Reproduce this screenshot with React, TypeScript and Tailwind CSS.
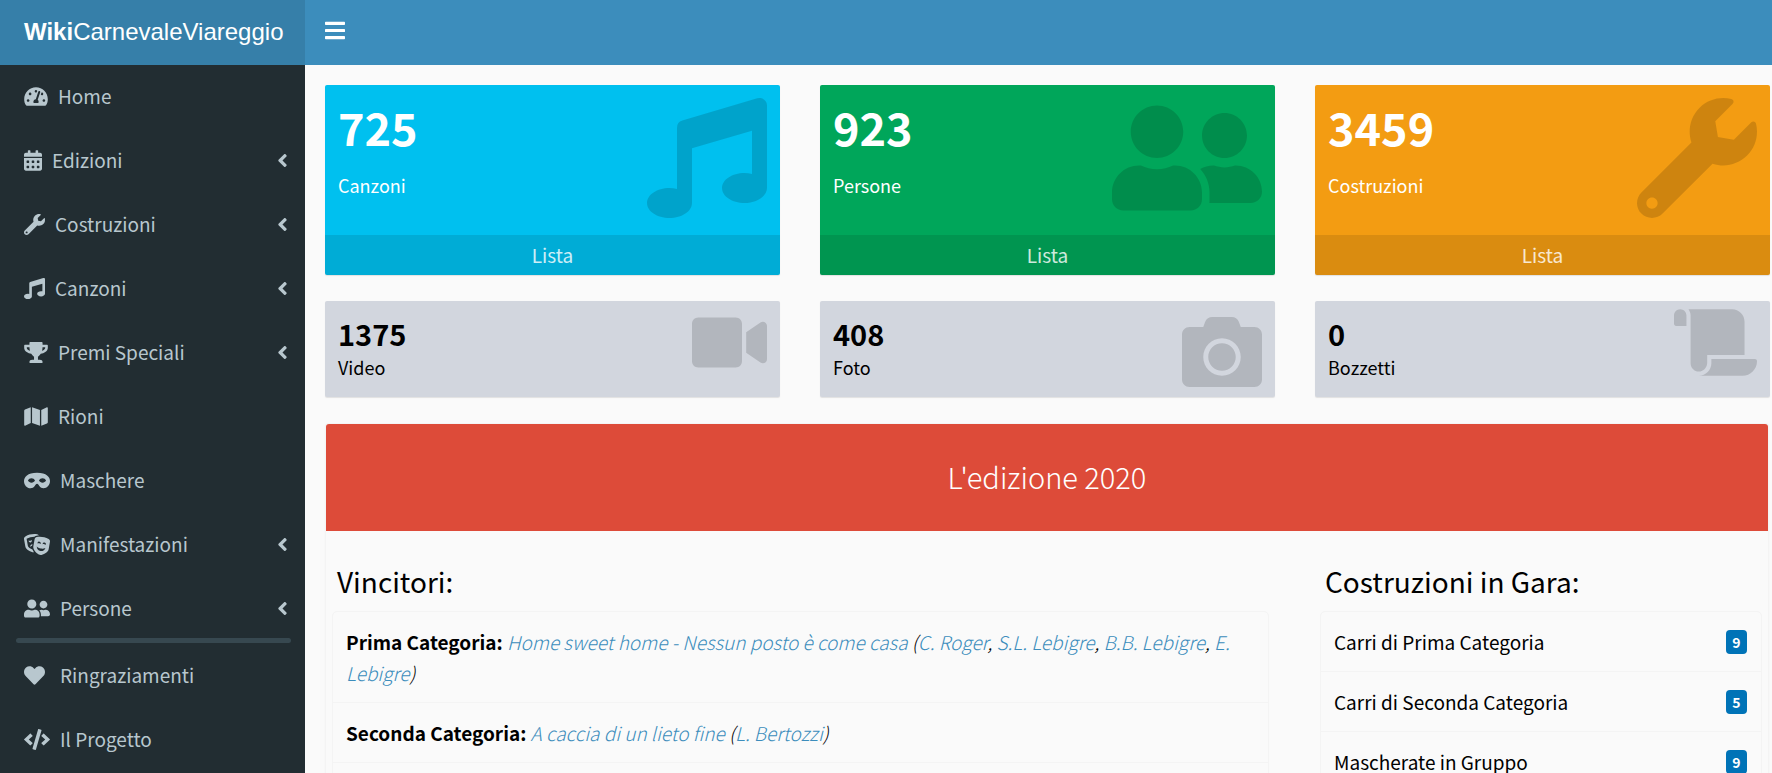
import type { ReactNode } from "react";
import type { IconType } from "react-icons";
import {
  FaAngleLeft,
  FaBars,
  FaCalendarAlt,
  FaCamera,
  FaCode,
  FaHeart,
  FaMap,
  FaMask,
  FaMusic,
  FaScroll,
  FaTachometerAlt,
  FaTheaterMasks,
  FaTrophy,
  FaUserFriends,
  FaVideo,
  FaWrench,
} from "react-icons/fa";

interface MenuItem {
  label: string;
  icon: IconType;
  iconClass: string;
  submenu?: boolean;
}

const menu: MenuItem[] = [
  { label: "Home", icon: FaTachometerAlt, iconClass: "w-6" },
  { label: "Edizioni", icon: FaCalendarAlt, iconClass: "w-[18px]", submenu: true },
  { label: "Costruzioni", icon: FaWrench, iconClass: "w-[21px]", submenu: true },
  { label: "Canzoni", icon: FaMusic, iconClass: "w-[21px]", submenu: true },
  { label: "Premi Speciali", icon: FaTrophy, iconClass: "w-6", submenu: true },
  { label: "Rioni", icon: FaMap, iconClass: "w-6" },
  { label: "Maschere", icon: FaMask, iconClass: "w-[26px]" },
  { label: "Manifestazioni", icon: FaTheaterMasks, iconClass: "w-[26px]", submenu: true },
  { label: "Persone", icon: FaUserFriends, iconClass: "w-[26px]", submenu: true },
];

const extraMenu: MenuItem[] = [
  { label: "Ringraziamenti", icon: FaHeart, iconClass: "w-[21px] mr-[5px]" },
  { label: "Il Progetto", icon: FaCode, iconClass: "w-[26px]" },
];

const categories = [
  { label: "Carri di Prima Categoria", count: 9 },
  { label: "Carri di Seconda Categoria", count: 5 },
  { label: "Mascherate in Gruppo", count: 9 },
];

export default function App() {
  return (
    <div className="h-screen overflow-hidden bg-[#fafafa] font-['Noto_Sans_CJK_SC',sans-serif] text-[19px] text-black">
      <Header />
      <div className="flex">
        <Sidebar />
        <main className="min-w-0 flex-1 pt-5 pr-[2px] pl-5">
          <div className="grid grid-cols-3 gap-x-10 gap-y-[26px]">
            <StatCard value="725" label="Canzoni" icon={FaMusic} iconClass="w-[120px]" color="bg-[#00c0ef]" />
            <StatCard value="923" label="Persone" icon={FaUserFriends} iconClass="w-[150px]" color="bg-[#00a65a]" />
            <StatCard value="3459" label="Costruzioni" icon={FaWrench} iconClass="w-[120px]" color="bg-[#f39c12]" />
            <SmallCard value="1375" label="Video" icon={FaVideo} iconClass="mt-2 h-[67px] w-[75px]" />
            <SmallCard value="408" label="Foto" icon={FaCamera} iconClass="mt-[11px] h-20 w-20" />
            <SmallCard value="0" label="Bozzetti" icon={FaScroll} iconClass="mt-2 h-[67px] w-[83px]" />
          </div>
          <Edition />
        </main>
      </div>
    </div>
  );
}

function Header() {
  return (
    <header className="flex h-[65px] bg-[#3c8dbc] text-white">
      <a
        href="#"
        className="flex w-[305px] items-center bg-[#367fa9] pb-[2px] pl-6 font-['Liberation_Sans',sans-serif] text-2xl"
      >
        <span>
          <b>Wiki</b>CarnevaleViareggio
        </span>
      </a>
      <button type="button" aria-label="Menu" className="px-5 pb-1">
        <FaBars className="h-[23px] w-5" />
      </button>
    </header>
  );
}

function Sidebar() {
  return (
    <nav className="min-h-screen w-[305px] bg-[#222d32] text-[#b8c7ce]">
      <ul className="-mt-px">
        {menu.map((item) => (
          <MenuRow key={item.label} {...item} />
        ))}
      </ul>
      <hr className="-mt-[2px] mr-[14px] ml-4 h-[5px] rounded-sm border-0 bg-[#374850]" />
      <ul>
        {extraMenu.map((item) => (
          <MenuRow key={item.label} {...item} />
        ))}
      </ul>
    </nav>
  );
}

function MenuRow({ label, icon: Icon, iconClass, submenu }: MenuItem) {
  return (
    <li>
      <a href="#" className="flex h-16 items-center pr-4 pl-6">
        <Icon className={`h-[21px] shrink-0 ${iconClass}`} />
        <span className="ml-[10px] flex-1">{label}</span>
        {submenu && <FaAngleLeft className="h-[21px] w-[13px]" />}
      </a>
    </li>
  );
}

interface CardProps {
  value: string;
  label: string;
  icon: IconType;
  iconClass: string;
}

function StatCard({ value, label, icon: Icon, iconClass, color }: CardProps & { color: string }) {
  return (
    <div className={`overflow-hidden rounded-[2px] text-white shadow-[0_1px_1px_rgba(0,0,0,0.1)] ${color}`}>
      <div className="flex h-[150px] justify-between px-[13px] pt-[13px]">
        <div>
          <h3 className="text-[45px] leading-[57px] font-bold">{value}</h3>
          <p className="mt-4 text-lg leading-7">{label}</p>
        </div>
        <Icon className={`h-[120px] text-black/15 ${iconClass}`} />
      </div>
      <a href="#" className="block bg-black/10 text-center leading-10 text-white/80">
        Lista
      </a>
    </div>
  );
}

function SmallCard({ value, label, icon: Icon, iconClass }: CardProps) {
  return (
    <div className="flex h-24 justify-between rounded-[2px] bg-[#d2d6de] px-[13px] shadow-[0_1px_1px_rgba(0,0,0,0.1)]">
      <div className="pt-[13px]">
        <h4 className="text-[29px] leading-[39px] font-bold">{value}</h4>
        <p className="text-lg leading-7">{label}</p>
      </div>
      <Icon className={`text-black/15 ${iconClass}`} />
    </div>
  );
}

function Edition() {
  return (
    <section className="mt-[26px] mr-px rounded-[3px] border border-[#f4f4f4] shadow-[0_1px_1px_rgba(0,0,0,0.1)]">
      <h2 className="rounded-t-[3px] bg-[#dd4b39] pt-8 pb-[35px] text-center text-[29px] leading-10 font-light text-white">
        L'edizione 2020
      </h2>
      <div className="flex gap-[51px] px-[6px] pt-[30px]">
        <div className="min-w-0 flex-[937]">
          <ListTitle>Vincitori:</ListTitle>
          <ul className="rounded-t-[5px] border border-[#f4f4f4]">
            <Winner category="Prima Categoria:" work="Home sweet home - Nessun posto è come casa">
              <Person>C. Roger</Person>, <Person>S.L. Lebigre</Person>, <Person>B.B. Lebigre</Person>,{" "}
              <Person>E. Lebigre</Person>
            </Winner>
            <Winner category="Seconda Categoria:" work="A caccia di un lieto fine">
              <Person>L. Bertozzi</Person>
            </Winner>
            <li className="h-[60px]"></li>
          </ul>
        </div>
        <div className="min-w-0 flex-[442]">
          <ListTitle>Costruzioni in Gara:</ListTitle>
          <ul className="rounded-t-[5px] border border-[#f4f4f4]">
            {categories.map(({ label, count }) => (
              <li
                key={label}
                className="flex h-[60px] items-center justify-between border-b border-[#f4f4f4] pt-px pr-[14px] pl-[13px]"
              >
                {label}
                <span className="w-[21px] rounded-[4px] bg-[#0073b7] text-center text-sm leading-6 font-bold text-white">
                  {count}
                </span>
              </li>
            ))}
          </ul>
        </div>
      </div>
    </section>
  );
}

function ListTitle({ children }: { children: ReactNode }) {
  return <h3 className="mb-[10px] pl-[5px] text-[28px] leading-10">{children}</h3>;
}

function Person({ children }: { children: ReactNode }) {
  return (
    <a href="#" className="text-[#3c8dbc]">
      {children}
    </a>
  );
}

interface WinnerProps {
  category: string;
  work: string;
  children: ReactNode;
}

function Winner({ category, work, children }: WinnerProps) {
  return (
    <li className="border-b border-[#f4f4f4] px-[13px] py-[14px] leading-[31px]">
      <b>{category}</b>{" "}
      <i className="font-light">
        <a href="#" className="text-[#3c8dbc]">
          {work}
        </a>{" "}
        ({children})
      </i>
    </li>
  );
}
